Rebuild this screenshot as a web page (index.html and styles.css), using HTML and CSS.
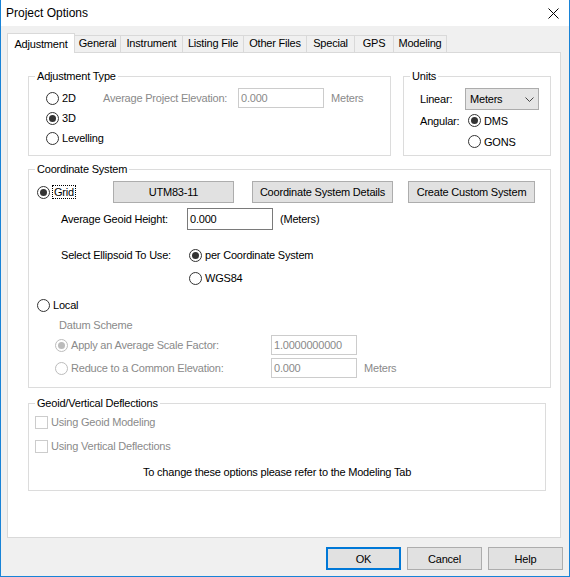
FILE: index.html
```html
<!DOCTYPE html>
<html>
<head>
<meta charset="utf-8">
<title>Project Options</title>
<link rel="stylesheet" href="styles.css">
</head>
<body>
<div class="window">
  <div class="titlebar">
    <span class="title">Project Options</span>
    <svg class="close" width="11" height="11" viewBox="0 0 11 11"><path d="M0.5 0.5 L10.5 10.5 M10.5 0.5 L0.5 10.5" stroke="#000" stroke-width="1" fill="none"/></svg>
  </div>
  <div class="client">
    <div class="tabs">
      <div class="tab active t-adj">Adjustment</div>
      <div class="tab t-general">General</div>
      <div class="tab t-instr">Instrument</div>
      <div class="tab t-listing">Listing File</div>
      <div class="tab t-other">Other Files</div>
      <div class="tab t-special">Special</div>
      <div class="tab t-gps">GPS</div>
      <div class="tab t-model">Modeling</div>
    </div>
    <div class="panel">
      <div class="row-top">
        <fieldset class="group g-adj">
          <legend>Adjustment Type</legend>
          <div class="adj-body">
            <div class="line">
              <span class="opt w-2d"><span class="radio"></span>2D</span>
              <span class="dis lbl-elev">Average Project Elevation:</span>
              <span class="field field-dis w-86">0.000</span>
              <span class="dis unit">Meters</span>
            </div>
            <div class="line"><span class="opt"><span class="radio checked"></span>3D</span></div>
            <div class="line"><span class="opt"><span class="radio"></span>Levelling</span></div>
          </div>
        </fieldset>
        <fieldset class="group g-units">
          <legend>Units</legend>
          <div class="units-body">
            <span class="ulabel">Linear:</span>
            <span class="select">Meters<svg class="chev" width="9" height="6" viewBox="0 0 9 6"><path d="M0.5 0.5 L4.5 4.5 L8.5 0.5" stroke="#444" fill="none"/></svg></span>
            <span class="ulabel">Angular:</span>
            <span class="opt uopt"><span class="radio checked"></span>DMS</span>
            <span></span>
            <span class="opt uopt"><span class="radio"></span>GONS</span>
          </div>
        </fieldset>
      </div>

      <fieldset class="group g-coord">
        <legend>Coordinate System</legend>
        <div class="coord-body">
          <div class="crow r-grid">
            <span class="opt w-grid"><span class="radio checked"></span><span class="focus">Grid</span></span>
            <span class="btn w-utm">UTM83-11</span>
            <span class="btn w-details">Coordinate System Details</span>
            <span class="btn w-custom">Create Custom System</span>
          </div>
          <div class="crow r-geoid">
            <span class="clabel w-geoid-lbl">Average Geoid Height:</span>
            <span class="field w-86">0.000</span>
            <span class="unit">(Meters)</span>
          </div>
          <div class="crow r-ellip">
            <span class="clabel w-ellip-lbl">Select Ellipsoid To Use:</span>
            <span class="opt"><span class="radio checked"></span>per Coordinate System</span>
          </div>
          <div class="crow r-wgs">
            <span class="opt"><span class="radio"></span>WGS84</span>
          </div>
          <div class="crow r-local">
            <span class="opt"><span class="radio"></span>Local</span>
          </div>
          <div class="crow r-datum">
            <span class="dis">Datum Scheme</span>
          </div>
          <div class="crow r-scale">
            <span class="opt dis w-scale"><span class="radio radio-dis checked"></span>Apply an Average Scale Factor:</span>
            <span class="field field-dis w-86">1.0000000000</span>
          </div>
          <div class="crow r-elev">
            <span class="opt dis w-scale"><span class="radio radio-dis"></span>Reduce to a Common Elevation:</span>
            <span class="field field-dis w-86">0.000</span>
            <span class="dis unit">Meters</span>
          </div>
        </div>
      </fieldset>

      <fieldset class="group g-geoid">
        <legend>Geoid/Vertical Deflections</legend>
        <div class="geoid-body">
          <div class="grow r-chk1"><span class="check"></span><span class="dis">Using Geoid Modeling</span></div>
          <div class="grow r-chk2"><span class="check"></span><span class="dis">Using Vertical Deflections</span></div>
          <div class="grow r-note">To change these options please refer to the Modeling Tab</div>
        </div>
      </fieldset>
    </div>
    <div class="buttons">
      <span class="btn dlg default">OK</span>
      <span class="btn dlg">Cancel</span>
      <span class="btn dlg">Help</span>
    </div>
  </div>
</div>
</body>
</html>
```
FILE: styles.css
```css
* { box-sizing: border-box; }
html, body { margin: 0; padding: 0; }
body {
  font-family: "Liberation Sans", Arial, sans-serif;
  font-size: 11px;
  letter-spacing: -0.2px;
  color: #000;
  background: #fff;
}
.window {
  width: 570px;
  height: 577px;
  border: 1px solid #1883d7;
  border-top: none;
  display: flex;
  flex-direction: column;
  background: #f0f0f0;
}
.titlebar {
  height: 26px;
  background: #fff;
  display: flex;
  align-items: center;
  justify-content: space-between;
  padding: 0 10px 0 5px;
  flex: none;
}
.title { font-size: 12px; letter-spacing: 0; }
.close { display: block; margin-top: 1px; }
.client {
  flex: 1;
  padding: 7px 0 0 6px;
  display: flex;
  flex-direction: column;
}
.tabs {
  display: flex;
  align-items: flex-end;
  height: 19px;
  position: relative;
  z-index: 1;
}
.tab {
  height: 17px;
  line-height: 15px;
  padding: 0;
  text-align: center;
  border: 1px solid #d9d9d9;
  border-bottom: none;
  border-left: none;
  background: #f0f0f0;
  white-space: nowrap;
}
.tab.active {
  height: 20px;
  margin-bottom: -1px;
  background: #fff;
  border-left: 1px solid #d9d9d9;
  padding-top: 2px;
  line-height: 16px;
}
.t-adj { width: 68px; }
.t-general { width: 46px; }
.t-instr { width: 62px; }
.t-listing { width: 61px; }
.t-other { width: 63px; }
.t-special { width: 48px; }
.t-gps { width: 39px; }
.t-model { width: 53px; }
.panel {
  width: 554px;
  height: 486px;
  background: #fff;
  border: 1px solid #d9d9d9;
  padding: 16px 0 0 20px;
}
.row-top { display: flex; gap: 12px; }
.group {
  margin: 0;
  padding: 0;
  min-width: 0;
  border: 1px solid #dcdcdc;
}
.group legend {
  padding: 0 2px;
  margin-left: 6px;
  line-height: 14px;
  font-size: 11px;
}
.g-adj { width: 363px; height: 87px; }
.g-units { width: 148px; height: 87px; }
.g-coord { width: 523px; height: 226px; margin-top: 6px; }
.g-geoid { width: 518px; height: 95px; margin-top: 8px; }

.adj-body { padding: 5px 0 0 17px; }
.line { height: 20px; display: flex; align-items: center; }
.opt { display: inline-flex; align-items: center; white-space: nowrap; }
.radio {
  width: 13px; height: 13px;
  border: 1px solid #333;
  border-radius: 50%;
  background: #fff;
  margin-right: 3px;
  display: inline-flex;
  align-items: center;
  justify-content: center;
  flex: none;
}
.radio.checked::after {
  content: "";
  width: 7px; height: 7px;
  border-radius: 50%;
  background: #333;
}
.radio.radio-dis { border-color: #bcbcbc; }
.radio.radio-dis.checked::after { background: #bcbcbc; }
.dis { color: #8a8a8a; }
.w-2d { width: 57px; }
.lbl-elev { width: 135px; white-space: nowrap; }
.field {
  height: 20px;
  border: 1px solid #7a7a7a;
  background: #fff;
  padding: 0 2px;
  display: inline-flex;
  align-items: center;
  flex: none;
}
.field-dis { border-color: #cccccc; color: #8a8a8a; }
.w-86 { width: 86px; }
.unit { margin-left: 7px; }

.units-body {
  padding: 5px 0 0 16px;
  display: grid;
  grid-template-columns: 45px 74px;
  grid-template-rows: 22px 21px 21px;
  align-items: center;
}
.select {
  height: 22px;
  background: #e5e5e5;
  border: 1px solid #acacac;
  display: flex;
  align-items: center;
  justify-content: space-between;
  padding: 0 4px 0 4px;
}
.chev { display: block; margin-top: 1px; }
.uopt { margin-left: 3px; }

.coord-body { padding: 5px 0 0 8px; }
.crow { display: flex; align-items: center; }
.r-grid { height: 22px; }
.w-grid { width: 76px; }
.focus { border: 1px dotted #000; padding: 0 1px; line-height: 12px; margin-left: -1px; }
.btn {
  height: 22px;
  background: #e1e1e1;
  border: 1px solid #adadad;
  display: inline-flex;
  align-items: center;
  justify-content: center;
  white-space: nowrap;
  flex: none;
}
.w-utm { width: 121px; }
.w-details { width: 141px; margin-left: 18px; }
.w-custom { width: 127px; margin-left: 15px; }
.r-geoid { height: 22px; margin-top: 5px; padding-left: 24px; }
.r-geoid .field { height: 22px; }
.w-geoid-lbl { width: 126px; }
.r-ellip { height: 20px; margin-top: 15px; padding-left: 24px; }
.w-ellip-lbl { width: 128px; }
.r-wgs { height: 20px; margin-top: 3px; padding-left: 152px; }
.r-local { height: 20px; margin-top: 7px; }
.r-datum { height: 18px; margin-top: 1px; padding-left: 22px; }
.r-scale { height: 22px; padding-left: 18px; }
.w-scale { width: 216px; }
.r-elev { height: 22px; margin-top: 1px; padding-left: 18px; }

.geoid-body { padding: 2px 0 0 6px; }
.grow { display: flex; align-items: center; height: 20px; }
.check {
  width: 13px; height: 13px;
  border: 1px solid #cccccc;
  background: #fff;
  margin-right: 3px;
  flex: none;
}
.r-chk2 { margin-top: 4px; }
.r-note { margin-top: 7px; height: 18px; padding-left: 108px; }

.buttons {
  display: flex;
  justify-content: flex-end;
  gap: 6px;
  margin-top: 9px;
  padding-right: 6px;
}
.btn.dlg { width: 75px; height: 23px; }
.btn.default { border: 1px solid #0078d7; box-shadow: inset 0 0 0 1px #0078d7; }
```
